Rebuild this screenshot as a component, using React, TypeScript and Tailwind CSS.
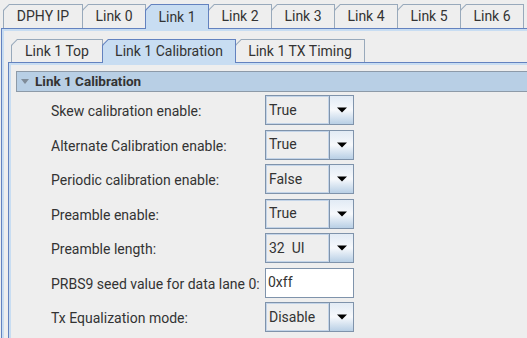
import React from 'react';

type TabDef = { label: string; w: string; active?: boolean };

const outerTabs: TabDef[] = [
  { label: 'DPHY IP', w: 'w-[80px]' },
  { label: 'Link 0', w: 'w-[64px]' },
  { label: 'Link 1', w: 'w-[64px]', active: true },
  { label: 'Link 2', w: 'w-[64px]' },
  { label: 'Link 3', w: 'w-[64px]' },
  { label: 'Link 4', w: 'w-[64px]' },
  { label: 'Link 5', w: 'w-[64px]' },
  { label: 'Link 6', w: 'w-[64px]' },
];

const innerTabs: TabDef[] = [
  { label: 'Link 1 Top', w: 'w-[92px]' },
  { label: 'Link 1 Calibration', w: 'w-[134px]', active: true },
  { label: 'Link 1 TX Timing', w: 'w-[130px]' },
];

const rows: { label: string; value: string; kind: 'combo' | 'text' }[] = [
  { label: 'Skew calibration enable:', value: 'True', kind: 'combo' },
  { label: 'Alternate Calibration enable:', value: 'True', kind: 'combo' },
  { label: 'Periodic calibration enable:', value: 'False', kind: 'combo' },
  { label: 'Preamble enable:', value: 'True', kind: 'combo' },
  { label: 'Preamble length:', value: '32  UI', kind: 'combo' },
  { label: 'PRBS9 seed value for data lane 0:', value: '0xff', kind: 'text' },
  { label: 'Tx Equalization mode:', value: 'Disable', kind: 'combo' },
];

// metal-style tab with the cut top-left corner
const Tab = ({ tab, first, small }: { tab: TabDef; first: boolean; small?: boolean }) => {
  const height = tab.active
    ? small
      ? 'h-[24px] -mb-px relative z-10'
      : 'h-[25px] -mb-px relative z-10'
    : small
      ? 'h-[23px]'
      : 'h-[24px]';
  return (
    <div
      className={`${tab.w} ${height} ${first ? '' : '-ml-px'} ${
        tab.active ? 'bg-[#6382bf]' : 'bg-[#98a9bb]'
      } pt-px px-px [clip-path:polygon(6px_0,100%_0,100%_100%,0_100%,0_6px)]`}
    >
      <div
        className={`h-full flex items-center justify-center whitespace-nowrap ${
          tab.active ? 'bg-[#c8ddf2]' : 'bg-[#eeeeee]'
        } [clip-path:polygon(5.4px_0,100%_0,100%_100%,0_100%,0_5.4px)]`}
      >
        {tab.label}
      </div>
    </div>
  );
};

const Combo = ({ value }: { value: string }) => (
  <div className="w-[89px] h-[30px] flex border border-[#7f93ab]">
    <div className="flex-1 flex items-center pl-[2px] bg-[#eeeeee] border border-[#c3d4e8] whitespace-pre">
      {value}
    </div>
    <div className="w-[24px] flex items-center justify-center border-l border-[#7f93ab] bg-linear-to-b from-[#e2ebf5] via-[#f7f9fc] to-[#b8cfe5]">
      <svg width="10" height="6" viewBox="0 0 10 6">
        <path d="M0 0.5h10L5 5.5z" fill="#000" />
      </svg>
    </div>
  </div>
);

const TextField = ({ value }: { value: string }) => (
  <div className="w-[89px] h-[30px] flex items-center pl-[2px] bg-white border border-[#7f93ab]">
    {value}
  </div>
);

export default function App() {
  return (
    <div className="w-[527px] h-[338px] overflow-hidden flex flex-col bg-[#eeeeee] text-[14px] text-[#333333] font-['Roboto','Liberation_Sans',sans-serif]">
      {/* outer tab strip */}
      <div className="flex items-end pt-[4px] pl-[3px]">
        {outerTabs.map((t, i) => (
          <Tab key={t.label} tab={t} first={i === 0} />
        ))}
      </div>

      {/* outer content */}
      <div className="flex-1 ml-px border-l border-t border-[#6382bf] pl-[2px] pt-[2px] bg-[#c8ddf2] flex flex-col">
        <div className="flex-1 bg-[#eeeeee] flex flex-col pl-[4px] pt-[8px]">
          {/* inner tab strip */}
          <div className="flex items-end pl-[3px]">
            {innerTabs.map((t, i) => (
              <Tab key={t.label} tab={t} first={i === 0} small />
            ))}
          </div>

          {/* inner content */}
          <div className="flex-1 border-l border-t border-[#6382bf] pl-[2px] pt-[2px] bg-[#c8ddf2] flex flex-col">
            <div className="flex-1 bg-[#eeeeee] flex flex-col">
              <div className="ml-[5px] mt-[6px] h-[21px] flex items-center bg-[#b8cfe5] border-t border-b border-l border-[#8d9aa8] pl-[4px]">
                <svg width="8" height="5" viewBox="0 0 8 5">
                  <path d="M0 0h8L4 5z" fill="#7f8c99" />
                </svg>
                <span className="ml-[6px] font-bold text-[13.5px]">Link 1 Calibration</span>
              </div>

              <div className="mt-[3px] pl-[40px] grid grid-cols-[214px_89px] gap-y-[4.5px]">
                {rows.map((r) => (
                  <React.Fragment key={r.label}>
                    <div className="h-[30px] pt-[3px] flex items-center whitespace-nowrap">{r.label}</div>
                    {r.kind === 'combo' ? <Combo value={r.value} /> : <TextField value={r.value} />}
                  </React.Fragment>
                ))}
              </div>
            </div>
          </div>
        </div>
      </div>
    </div>
  );
}
